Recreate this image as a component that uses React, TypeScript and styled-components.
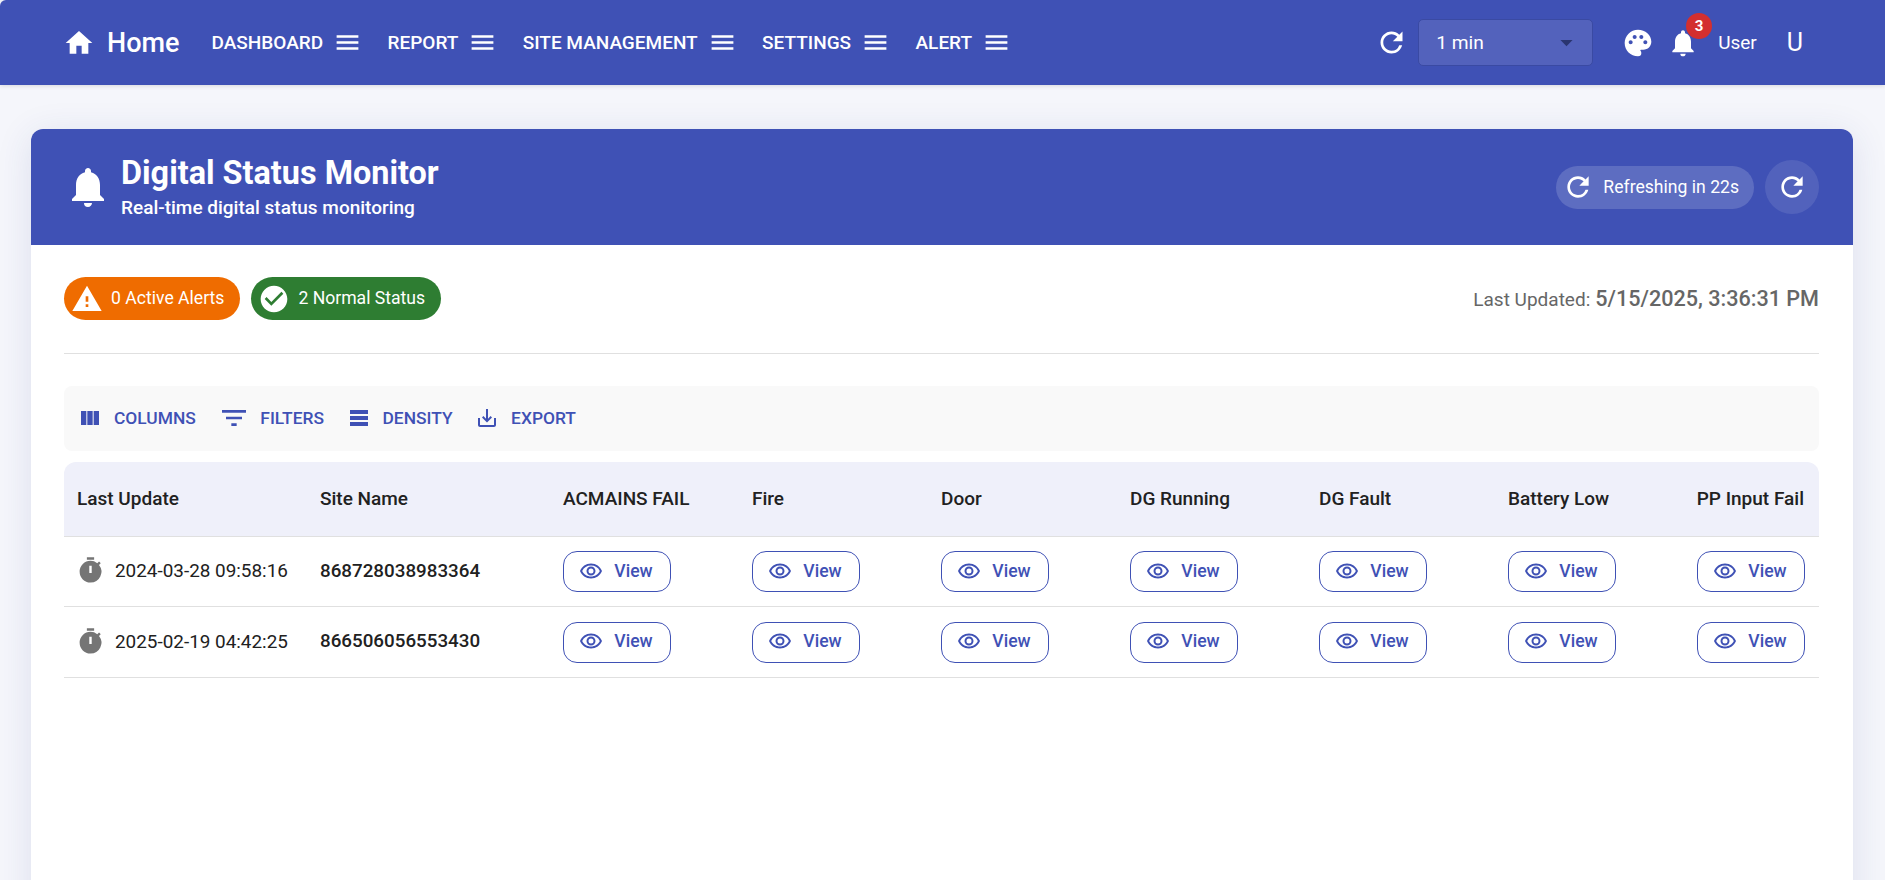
import React from 'react';
import styled, { createGlobalStyle } from 'styled-components';
import {
  MdHome,
  MdMenu,
  MdRefresh,
  MdPalette,
  MdNotifications,
  MdArrowDropDown,
  MdWarning,
  MdCheckCircle,
  MdViewColumn,
  MdFilterList,
  MdTableRows,
  MdSaveAlt,
  MdTimer,
  MdOutlineRemoveRedEye,
} from 'react-icons/md';

const GlobalStyle = createGlobalStyle`
  html, body {
    margin: 0;
    height: 100%;
    overflow: hidden;
    background: #f5f6fb;
    font-family: Roboto, "Liberation Sans", sans-serif;
  }
`;

const TopBar = styled.header`
  height: 85px;
  display: flex;
  align-items: center;
  padding: 0 82px 0 63px;
  background: #3f51b5;
  color: #fff;
  border-top-left-radius: 6px;
  box-shadow: 0 1px 4px rgba(0, 0, 0, 0.12);
`;

const Brand = styled.div`
  display: flex;
  align-items: center;
  gap: 12px;
  margin-right: 32px;
  font-size: 27px;
  font-weight: 500;
`;

const NavItem = styled.div`
  display: flex;
  align-items: center;
  gap: 10px;
  margin-right: 25.4px;
  font-size: 19px;
  font-weight: 500;
  white-space: nowrap;
`;

const Spacer = styled.div`
  flex: 1;
`;

const IntervalSelect = styled.div`
  width: 175px;
  height: 47px;
  box-sizing: border-box;
  display: flex;
  align-items: center;
  justify-content: space-between;
  margin: 0 29px 0 10px;
  padding: 0 11px 0 17px;
  background: #5362bc;
  border: 1px solid #3a4aa3;
  border-radius: 5px;
  font-size: 19.2px;
  color: #fff;

  svg {
    color: #2a3570;
  }
`;

const BellWrap = styled.div`
  position: relative;
  display: flex;
  margin: 0 19px 0 13px;
`;

const Badge = styled.span`
  position: absolute;
  top: -14px;
  right: -13px;
  width: 26px;
  height: 26px;
  display: flex;
  align-items: center;
  justify-content: center;
  border-radius: 50%;
  background: #d32f2f;
  font-size: 15px;
  font-weight: 700;
`;

const UserName = styled.span`
  font-size: 19px;
  margin-right: 30px;
`;

const UserInitial = styled.span`
  font-size: 25px;
`;

const Main = styled.main`
  padding: 44px 32px 0 31px;
`;

const Card = styled.section`
  min-height: 800px;
  background: #fff;
  border-radius: 12px 12px 0 0;
  box-shadow: 0 6px 36px rgba(40, 60, 140, 0.12);
`;

const CardHeader = styled.div`
  height: 116px;
  display: flex;
  align-items: center;
  padding: 0 34px 0 33px;
  background: #3f51b5;
  color: #fff;
  border-radius: 12px 12px 0 0;
`;

const TitleBlock = styled.div`
  margin-left: 9px;
  padding-bottom: 1px;
  flex: 1;
`;

const Title = styled.h1`
  margin: 0 0 4px;
  font-size: 32.4px;
  line-height: 38px;
  font-weight: 700;
`;

const Subtitle = styled.p`
  margin: 0;
  font-size: 19px;
  line-height: 24px;
  font-weight: 500;
`;

const RefreshPill = styled.div`
  height: 43px;
  display: flex;
  align-items: center;
  gap: 9px;
  padding: 0 15px 0 6px;
  border-radius: 22px;
  background: rgba(255, 255, 255, 0.16);
  font-size: 17.6px;
`;

const RoundButton = styled.div`
  width: 54px;
  height: 54px;
  margin-left: 11px;
  display: flex;
  align-items: center;
  justify-content: center;
  border-radius: 50%;
  background: rgba(255, 255, 255, 0.1);
`;

const CardBody = styled.div`
  padding: 32px 34px 0 33px;
`;

const StatusRow = styled.div`
  display: flex;
  align-items: center;
  gap: 11px;
  padding-bottom: 33px;
  border-bottom: 1px solid #e0e0e0;
  margin-bottom: 32px;
`;

const StatusChip = styled.div<{ $bg: string }>`
  height: 43px;
  display: flex;
  align-items: center;
  gap: 8px;
  padding: 0 16px 2px 7px;
  box-sizing: border-box;
  border-radius: 22px;
  background: ${(p) => p.$bg};
  color: #fff;
  font-size: 17.6px;

  svg {
    margin-top: 2px;
  }
`;

const LastUpdated = styled.div`
  margin-left: auto;
  color: #666;
  font-size: 19px;

  b {
    font-size: 21.6px;
    font-weight: 500;
    margin-left: 5px;
  }
`;

const Toolbar = styled.div`
  height: 65px;
  box-sizing: border-box;
  display: flex;
  align-items: center;
  padding: 0 0 2px 14px;
  margin-bottom: 11px;
  border-radius: 8px;
  background: #f9f9f9;
`;

const ToolButton = styled.div<{ $gap?: number }>`
  display: flex;
  align-items: center;
  gap: ${(p) => p.$gap ?? 12}px;
  margin-right: 22.5px;
  color: #3f51b5;
  font-size: 17.4px;
  font-weight: 500;
`;

const TableRow = styled.div<{ $head?: boolean; $height: number }>`
  display: grid;
  grid-template-columns: 243px 243px repeat(6, 189px) 135px;
  height: ${(p) => p.$height}px;
  box-sizing: border-box;
  align-items: center;
  border-bottom: 1px solid #e0e0e0;
  background: ${(p) => (p.$head ? '#eff0fa' : '#fff')};
  border-radius: ${(p) => (p.$head ? '12px 12px 0 0' : '0')};
  color: #212121;
`;

const HeadCell = styled.div<{ $last?: boolean }>`
  display: flex;
  justify-content: ${(p) => (p.$last ? 'flex-end' : 'flex-start')};
  padding: ${(p) => (p.$last ? '0 15px 1px 0' : '0 0 1px 13px')};
  font-size: 19px;
  font-weight: 500;
  white-space: nowrap;
`;

const TimeCell = styled.div`
  display: flex;
  align-items: center;
  gap: 10px;
  padding: 0 0 2px 12px;
  font-size: 18.9px;
  white-space: nowrap;

  svg {
    color: #757575;
  }
`;

const SiteCell = styled.div`
  padding: 0 0 2px 13px;
  font-size: 18.8px;
  font-weight: 500;
`;

const ViewCell = styled.div`
  padding-left: 13px;
`;

const ViewButton = styled.button`
  width: 108px;
  height: 41px;
  display: flex;
  align-items: center;
  justify-content: center;
  gap: 11px;
  padding: 0 2px 2px 0;
  background: #fff;
  border: 1px solid #3f51b5;
  border-radius: 14px;
  color: #3f51b5;
  font-family: inherit;
  font-size: 17.6px;
  font-weight: 500;
`;

const navItems = ['DASHBOARD', 'REPORT', 'SITE MANAGEMENT', 'SETTINGS', 'ALERT'];
const columns = ['Last Update', 'Site Name', 'ACMAINS FAIL', 'Fire', 'Door', 'DG Running', 'DG Fault', 'Battery Low', 'PP Input Fail'];
const signalCount = 7;
const rows = [
  { time: '2024-03-28 09:58:16', site: '868728038983364', height: 70 },
  { time: '2025-02-19 04:42:25', site: '866506056553430', height: 71 },
];

export default function App() {
  return (
    <>
      <GlobalStyle />
      <TopBar>
        <Brand>
          <MdHome size={32} />
          Home
        </Brand>
        {navItems.map((item) => (
          <NavItem key={item}>
            {item}
            <MdMenu size={29} />
          </NavItem>
        ))}
        <Spacer />
        <MdRefresh size={33} />
        <IntervalSelect>
          1 min
          <MdArrowDropDown size={29} />
        </IntervalSelect>
        <MdPalette size={32} />
        <BellWrap>
          <MdNotifications size={32} />
          <Badge>3</Badge>
        </BellWrap>
        <UserName>User</UserName>
        <UserInitial>U</UserInitial>
      </TopBar>
      <Main>
        <Card>
          <CardHeader>
            <MdNotifications size={48} />
            <TitleBlock>
              <Title>Digital Status Monitor</Title>
              <Subtitle>Real-time digital status monitoring</Subtitle>
            </TitleBlock>
            <RefreshPill>
              <MdRefresh size={32} />
              Refreshing in 22s
            </RefreshPill>
            <RoundButton>
              <MdRefresh size={32} />
            </RoundButton>
          </CardHeader>
          <CardBody>
            <StatusRow>
              <StatusChip $bg="#ef6c00">
                <MdWarning size={32} />
                0 Active Alerts
              </StatusChip>
              <StatusChip $bg="#2e7d32">
                <MdCheckCircle size={32} />
                2 Normal Status
              </StatusChip>
              <LastUpdated>
                Last Updated:<b>5/15/2025, 3:36:31 PM</b>
              </LastUpdated>
            </StatusRow>
            <Toolbar>
              <ToolButton>
                <MdViewColumn size={24} />
                COLUMNS
              </ToolButton>
              <ToolButton $gap={10}>
                <MdFilterList size={32} />
                FILTERS
              </ToolButton>
              <ToolButton>
                <MdTableRows size={24} />
                DENSITY
              </ToolButton>
              <ToolButton>
                <MdSaveAlt size={24} />
                EXPORT
              </ToolButton>
            </Toolbar>
            <TableRow $head $height={75}>
              {columns.map((col, i) => (
                <HeadCell key={col} $last={i === columns.length - 1}>
                  {col}
                </HeadCell>
              ))}
            </TableRow>
            {rows.map((row) => (
              <TableRow key={row.site} $height={row.height}>
                <TimeCell>
                  <MdTimer size={29} />
                  {row.time}
                </TimeCell>
                <SiteCell>{row.site}</SiteCell>
                {Array.from({ length: signalCount }, (_, i) => (
                  <ViewCell key={i}>
                    <ViewButton>
                      <MdOutlineRemoveRedEye size={24} />
                      View
                    </ViewButton>
                  </ViewCell>
                ))}
              </TableRow>
            ))}
          </CardBody>
        </Card>
      </Main>
    </>
  );
}
